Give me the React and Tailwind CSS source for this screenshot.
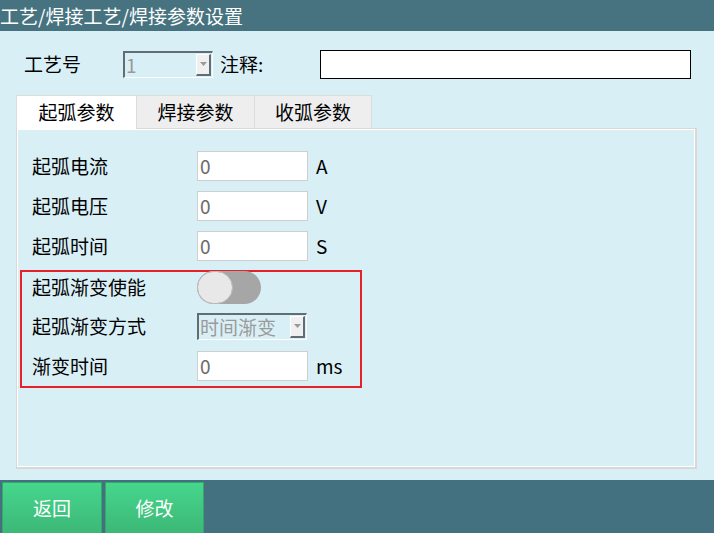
import React from "react";

const font = { fontFamily: '"Noto Sans CJK SC", "Noto Sans", sans-serif' };

function Field({ label, value, unit }) {
  return (
    <div className="flex items-center h-[30px]">
      <div className="w-[165px] text-[19px] text-black">{label}</div>
      <div className="w-[111px] h-[30px] bg-white border border-[#cfcfcf] flex items-center pl-[2px] text-[19px] text-[#6a6a6a]">{value}</div>
      <div className="ml-[8px] text-[19px] text-black">{unit}</div>
    </div>
  );
}

function Combo({ w, text }) {
  return (
    <div className={`${w} h-[27px] flex border-t-2 border-l-2 border-[#5f6e73] border-b border-r border-b-white border-r-white`}>
      <div className="flex-1 flex items-center pl-[1px] text-[19px] text-[#9a9a9a] leading-none">{text}</div>
      <div className="w-[15px] my-[1px] mr-[1px] bg-[#f0f0f0] border-t border-l border-white border-r-2 border-b-2 border-r-[#5f6e73] border-b-[#5f6e73] flex items-center justify-center">
        <svg width="7" height="4" viewBox="0 0 7 4"><path d="M0 0h7L3.5 4z" fill="#9a9a9a" /></svg>
      </div>
    </div>
  );
}

export default function App() {
  return (
    <div className="w-[714px] h-[533px] bg-[#d9eff6] flex flex-col overflow-hidden" style={font}>
      <div className="h-[31px] bg-[#46737f] text-white text-[19px] leading-[31px] pl-0 shrink-0">工艺/焊接工艺/焊接参数设置</div>
      <div className="flex-1 flex flex-col">
        <div className="flex items-center h-[28px] mt-[19px]">
          <div className="ml-[24px] w-[99px] text-[19px] text-black">工艺号</div>
          <Combo w="w-[90px]" text="1" />
          <div className="ml-[7px] w-[100px] text-[19px] text-black">注释:</div>
          <div className="w-[371px] h-[29px] bg-white border border-black"></div>
        </div>
        <div className="flex ml-[16px] mt-[17px] h-[34px] relative z-10">
          <div className="w-[120px] h-[34px] bg-white border-t border-l border-[#dcdcdc] flex items-center justify-center text-[19px] text-black">起弧参数</div>
          <div className="w-[118px] h-[33px] bg-[#eeeeee] border-t border-l border-[#dcdcdc] flex items-center justify-center text-[19px] text-black">焊接参数</div>
          <div className="w-[118px] h-[33px] bg-[#eeeeee] border-t border-l border-r border-[#dcdcdc] flex items-center justify-center text-[19px] text-black">收弧参数</div>
        </div>
        <div className="ml-[16px] w-[681px] h-[341px] -mt-[1px] border border-[#d8d8d8] border-r-2 border-b-2">
          <div className="w-full h-full border border-white pt-[21px] pl-[14px]">
            <div className="flex flex-col gap-[10px]">
              <Field label="起弧电流" value="0" unit="A" />
              <Field label="起弧电压" value="0" unit="V" />
              <Field label="起弧时间" value="0" unit="S" />
            </div>
            <div className="-ml-[12px] mt-[9px] w-[342px] h-[118px] border-2 border-[#e62129] pl-[10px]">
              <div className="flex items-center h-[32px] -mt-[1px]">
                <div className="w-[165px] text-[19px] text-black">起弧渐变使能</div>
                <div className="w-[64px] h-[33px] rounded-full bg-[#a6a6a6] flex items-center">
                  <div className="w-[36px] h-[33px] rounded-full bg-[#e8e8e8] border border-[#b8b8b8]"></div>
                </div>
              </div>
              <div className="flex items-center h-[30px] mt-[8px]">
                <div className="w-[165px] text-[19px] text-black">起弧渐变方式</div>
                <Combo w="w-[110px]" text="时间渐变" />
              </div>
              <div className="mt-[10px]">
                <Field label="渐变时间" value="0" unit="ms" />
              </div>
            </div>
          </div>
        </div>
      </div>
      <div className="h-[53px] bg-[#44717f] flex items-end pl-[2px] gap-[3px] shrink-0">
        <div className="w-[100px] h-[51px] bg-gradient-to-b from-[#46d68c] to-[#3cb877] border-t border-l border-r border-[#37a86c] flex items-center justify-center text-white text-[19px]">返回</div>
        <div className="w-[99px] h-[51px] bg-gradient-to-b from-[#46d68c] to-[#3cb877] border-t border-l border-r border-[#37a86c] flex items-center justify-center text-white text-[19px]">修改</div>
      </div>
    </div>
  );
}
